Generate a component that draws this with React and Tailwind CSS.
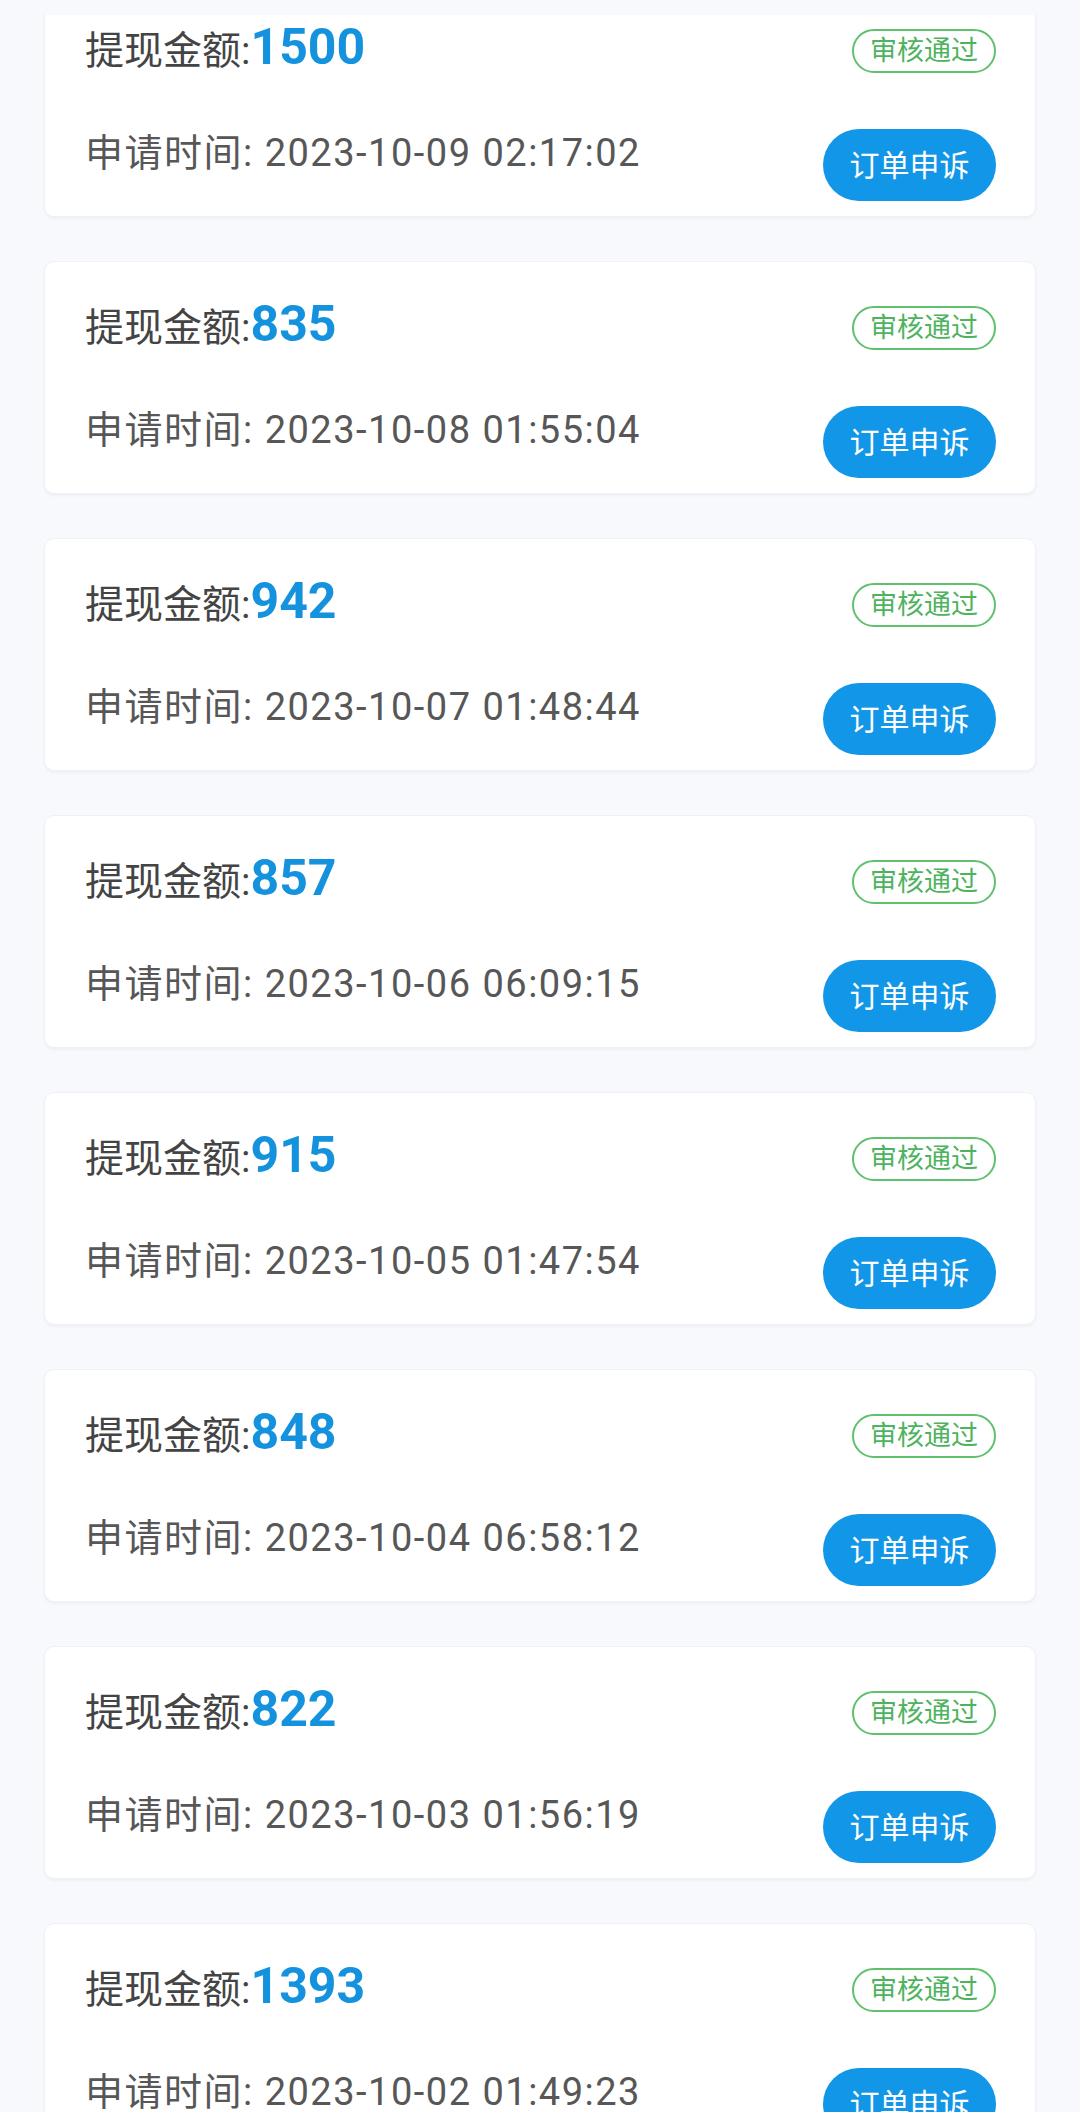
import React from 'react';

const records = [
  { amount: '1500', time: '2023-10-09 02:17:02' },
  { amount: '835', time: '2023-10-08 01:55:04' },
  { amount: '942', time: '2023-10-07 01:48:44' },
  { amount: '857', time: '2023-10-06 06:09:15' },
  { amount: '915', time: '2023-10-05 01:47:54' },
  { amount: '848', time: '2023-10-04 06:58:12' },
  { amount: '822', time: '2023-10-03 01:56:19' },
  { amount: '1393', time: '2023-10-02 01:49:23' },
];

const RecordCard = ({ amount, time }) => (
  <div className="bg-white rounded-[10px] border border-[#eef1f5] shadow-[0_2px_3px_rgba(0,0,0,0.04)] pt-[43px] pb-[15px] pl-[40px] pr-[39px]">
    <div className="flex items-center justify-between h-[46px]">
      <div className="flex items-baseline text-[39px] text-[#444]">
        <span>提现金额:</span>
        <span className="text-[50px] font-bold text-[#1592dd] leading-none">{amount}</span>
      </div>
      <span className="h-[44px] w-[144px] rounded-full border-2 border-[#5fc06d] text-[#4eb35e] text-[27px] flex items-center justify-center">
        审核通过
      </span>
    </div>
    <div className="flex items-start justify-between mt-[55px]">
      <span className="text-[38px] leading-[48px] tracking-[1.5px] text-[#575757]">申请时间: {time}</span>
      <button className="h-[72px] w-[173px] rounded-full bg-[#1196e8] text-white text-[30px] flex items-center justify-center">
        订单申诉
      </button>
    </div>
  </div>
);

export default function App() {
  return (
    <div
      className="relative h-[2112px] w-[1080px] overflow-hidden bg-[#f7f9fc]"
      style={{ fontFamily: 'Roboto, "Noto Sans CJK SC", sans-serif' }}
    >
      <div className="flex flex-col gap-[44px] px-[44px] mt-[-16px]">
        {records.map((r) => (
          <RecordCard key={r.time} amount={r.amount} time={r.time} />
        ))}
      </div>
      {/* top strip over the scrolled list */}
      <div className="absolute top-0 left-0 right-0 h-[15px] bg-[#f7f9fc]" />
    </div>
  );
}
